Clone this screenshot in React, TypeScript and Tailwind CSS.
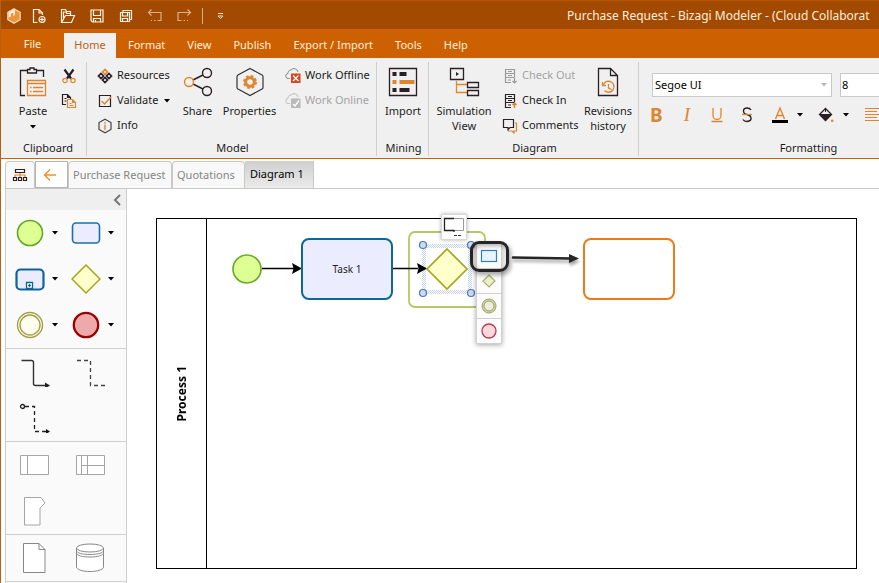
import type { ReactNode } from "react";

const ORANGE = "#e0852f";
const DARK = "#2b1f26";

function Caret({ className = "text-black" }: { className?: string }) {
  return (
    <svg width="6" height="4" viewBox="0 0 6 4" className={className} aria-hidden="true">
      <path d="M0 0h6L3 3.5z" fill="currentColor" />
    </svg>
  );
}

/* ---------- title bar ---------- */

function LogoIcon() {
  return (
    <svg width="16" height="16" viewBox="0 0 16 16">
      <path d="M8 .8l6.200 3.600v7.200L8 15.200 1.800 11.600V4.400z" fill="#ee9338" stroke="#f3d9bd" strokeWidth="1.200" />
      <path d="M8 1.500L2.500 4.700v4.800L5 8.500V5.500L7 5l.5 3L9 7V2z" fill="#fbead6" />
    </svg>
  );
}
function NewIcon() {
  return (
    <svg width="16" height="16" viewBox="0 0 16 16" fill="none" stroke="#fff3e3" strokeWidth="1.2">
      <path d="M6.500 14.500h-4v-13h5.500l3.500 3.500v2M8 1.500V5h3.500" />
      <circle cx="11" cy="11.500" r="3" />
      <path d="M11 9.500v4M9 11.500h4" />
    </svg>
  );
}
function OpenIcon() {
  return (
    <svg width="16" height="16" viewBox="0 0 16 16" fill="none" stroke="#fff3e3" strokeWidth="1.2">
      <path d="M1.500 14.500v-13h4l1 2h4v4M1.500 14.500l4-7h9l-3 7zM3.500 10V4h3v1.500h4" />
    </svg>
  );
}
function SaveIcon() {
  return (
    <svg width="16" height="16" viewBox="0 0 16 16" fill="none" stroke="#fff3e3" strokeWidth="1.2">
      <path d="M2 2h12v12H3.500L2 12.500zM4.500 2v5.500h7V2M4.500 14v-3.500h7V14M6.500 12v2" />
    </svg>
  );
}
function SaveAllIcon() {
  return (
    <svg width="16" height="16" viewBox="0 0 16 16" fill="none" stroke="#fff3e3" strokeWidth="1.2">
      <path d="M5 4.500V2.500h8.500v9h-2M2.500 4.500h9v9h-9zM4.500 4.500v3.500h5V4.500M4.500 13.500v-3h5v3" />
    </svg>
  );
}
function UndoIcon({ flip = false }: { flip?: boolean }) {
  return (
    <svg width="16" height="16" viewBox="0 0 16 16" fill="none" stroke="#dcae84" strokeWidth="1.2" className={flip ? "-scale-x-100" : ""}>
      <path d="M4.500 1.500l-3 3 3 3M1.500 4.500h12.500v8H10.500M8.500 12.500h-1.500M5 12.500h-1" />
    </svg>
  );
}

function TitleBar() {
  const tools: [string, ReactNode][] = [
    ["New", <NewIcon />],
    ["Open", <OpenIcon />],
    ["Save", <SaveIcon />],
    ["Save all", <SaveAllIcon />],
    ["Undo", <UndoIcon />],
    ["Redo", <UndoIcon flip />],
  ];
  return (
    <header className="flex h-[29px] shrink-0 items-center overflow-hidden border-t border-[#b85500] bg-[#a24a00] pt-0.5">
      <div className="flex w-[235px] shrink-0 items-center pl-[5px]">
        <LogoIcon />
        <div className="ml-[9px] flex items-center gap-[13px]">
          {tools.map(([name, icon]) => (
            <button key={name} aria-label={name} className="block">
              {icon}
            </button>
          ))}
        </div>
        <span className="ml-2.5 h-4 w-px bg-[#dcae84]" />
        <button aria-label="Customize toolbar" className="ml-[14px]">
          <svg width="7" height="7" viewBox="0 0 7 7" fill="none" stroke="#f6e3cf">
            <path d="M1 .5h5M1 3l2.500 2.500L6 3z" />
          </svg>
        </button>
      </div>
      <h1 className="ml-[331px] text-[12px] whitespace-nowrap text-[#fdeedd]">
        Purchase Request - Bizagi Modeler - (Cloud Collaborat
      </h1>
    </header>
  );
}

function MenuTabs() {
  const tabs = ["Format", "View", "Publish", "Export / Import", "Tools", "Help"];
  return (
    <nav className="flex h-[29px] shrink-0 items-end bg-[#cd6000] text-[#fff0df]">
      <button className="h-[28px] w-[63px]">File</button>
      <button className="mr-px h-[25px] w-[52px] bg-[#f0f0f0] text-[#c26012]">Home</button>
      {tabs.map((t) => (
        <button key={t} className="h-[25px] px-[11px]">
          {t}
        </button>
      ))}
    </nav>
  );
}

/* ---------- ribbon icons ---------- */

function PasteIcon() {
  return (
    <svg width="28" height="32" viewBox="0 0 28 32" fill="none" stroke={DARK} strokeWidth="1.3">
      <path d="M6 29.500H1.500V4.500H8M18 4.500h6.500V11M8.500 7V3.500h2.500V2h4v1.500h2.500V7z" />
      <g stroke={ORANGE}>
        <path d="M8.500 14.500h18v15h-18zM8.500 17.500h18" />
        <path d="M11 21.500h1.500M14 21.500h10M11 25.500h1.500M14 25.500h10" strokeWidth="1.6" />
      </g>
    </svg>
  );
}
function CutIcon() {
  return (
    <svg width="16" height="16" viewBox="0 0 16 16" fill="none">
      <path d="M3.500 1.500l6.500 9M12.500 1.500l-6.500 9" stroke={DARK} strokeWidth="2.2" />
      <circle cx="4" cy="12.500" r="2.2" stroke={ORANGE} strokeWidth="1.2" />
      <circle cx="12" cy="12.500" r="2.2" stroke={ORANGE} strokeWidth="1.2" />
    </svg>
  );
}
function CopyIcon() {
  return (
    <svg width="16" height="16" viewBox="0 0 16 16" fill="none" strokeWidth="1.2">
      <path d="M5 11.500H1.500v-10h5l3 3V6M6.500 1.500v3h3M3.500 5.500h2M3.500 8h2" stroke={DARK} />
      <path d="M6.500 6.500h5l3 3v5h-8zM11.500 6.500v3h3M8.500 10.500h2M8.500 12.500h4" stroke={ORANGE} />
    </svg>
  );
}
function ResourcesIcon() {
  return (
    <svg width="16" height="16" viewBox="0 0 16 16" fill="none" strokeWidth="1.7" stroke={DARK}>
      <path d="M4 5.500l2.500 2.500L4 10.500 1.500 8z" />
      <path d="M12 5.500l2.500 2.500L12 10.500 9.500 8z" />
      <path d="M8 9.500l2.500 2.500L8 14.500 5.500 12z" />
      <path d="M8 1.500l2.500 2.500L8 6.500 5.500 4z" stroke={ORANGE} />
    </svg>
  );
}
function ValidateIcon() {
  return (
    <svg width="16" height="16" viewBox="0 0 16 16" fill="none" strokeWidth="1.2">
      <path d="M2.500 2.500h11v11h-11z" stroke={DARK} />
      <path d="M4.500 8l3 3 6.500-7" stroke={ORANGE} strokeWidth="1.4" />
    </svg>
  );
}
function InfoIcon() {
  return (
    <svg width="16" height="16" viewBox="0 0 16 16" fill="none" strokeWidth="1.2">
      <path d="M8 1.200l6 3.400v6.800l-6 3.400-6-3.400V4.600z" stroke="#444" />
      <path d="M8 4v1.500M8 6.500V12" stroke={ORANGE} strokeWidth="1.4" />
    </svg>
  );
}
function ShareIcon() {
  return (
    <svg width="32" height="32" viewBox="0 0 32 32" fill="none" stroke={DARK} strokeWidth="1.4">
      <path d="M11 14L21 9M11 18l10 5" />
      <circle cx="25" cy="7" r="4.500" />
      <circle cx="25" cy="25" r="4.500" />
      <circle cx="7" cy="16" r="4.500" stroke={ORANGE} />
    </svg>
  );
}
function PropertiesIcon() {
  return (
    <svg width="32" height="32" viewBox="0 0 32 32" fill="none">
      <path d="M16 2.500L28 9q1 .6 1 1.600v10.800q0 1-1 1.600L16 29.500 4 23q-1-.6-1-1.600V10.600Q3 9.600 4 9z" stroke="#333" strokeWidth="1.2" />
      <circle cx="16" cy="16" r="4.300" stroke={ORANGE} strokeWidth="3" />
      <circle cx="16" cy="16" r="6" stroke={ORANGE} strokeWidth="2" strokeDasharray="2.700 2" />
    </svg>
  );
}
function CloudIcon({ online = false }: { online?: boolean }) {
  return (
    <svg width="16" height="16" viewBox="0 0 16 16" fill="none">
      <path d="M5 10.500H3.500a2.500 2.500 0 01-.5-5 3 3 0 013-3.500 4 4 0 017 2" stroke={online ? "#bdbdbd" : "#888"} />
      <path d="M6 5.500h9.500V15H6z" fill={online ? "#b9b9b9" : "#d2471f"} />
      {online ? (
        <path d="M8 11l2 2 4-5.500" stroke="#fff" strokeWidth="1.4" />
      ) : (
        <path d="M8 7.500l5.500 5.500M13.500 7.500L8 13" stroke="#fff" strokeWidth="1.3" />
      )}
    </svg>
  );
}
function ImportIcon() {
  return (
    <svg width="30" height="32" viewBox="0 0 30 32">
      <path d="M1.500 2.500h27v27h-27z" fill="none" stroke={DARK} strokeWidth="1.3" />
      <path d="M4.500 6h4v4h-4zM11.500 6h7v4h-7zM4.500 22h4v4h-4zM11.500 22h10v4h-10z" fill={DARK} />
      <path d="M4.500 14h4v4h-4zM11.500 14h15v4h-15z" fill={ORANGE} />
    </svg>
  );
}
function SimulationIcon() {
  return (
    <svg width="32" height="32" viewBox="0 0 32 32" fill="none" strokeWidth="1.3">
      <path d="M8.500 15v11.500H19M8.500 18.500H19" stroke={ORANGE} />
      <path d="M2.500 2.500h13v11h-13zM19.500 16.500h11v5h-11zM19.500 24.500h11v5h-11z" stroke={DARK} />
      <path d="M8 6l3 2-3 2z" fill={DARK} />
    </svg>
  );
}
function CheckIcon({ out = false }: { out?: boolean }) {
  return (
    <svg width="16" height="16" viewBox="0 0 16 16" fill="none" strokeWidth="1.2" stroke={out ? "#999" : DARK}>
      <path d="M9 14.500H3.500v-13h9V9M3.500 5.500h9M3.500 9.500h9M6 3.500h4M6 7.500h4M6 12h3" />
      {out ? (
        <path d="M12.500 10v5M10.500 13l2 2 2-2" />
      ) : (
        <path d="M12.500 15v-5M10.500 12l2-2 2 2" stroke={ORANGE} strokeWidth="1.5" />
      )}
    </svg>
  );
}
function CommentsIcon() {
  return (
    <svg width="16" height="16" viewBox="0 0 16 16" fill="none" strokeWidth="1.2">
      <path d="M13 5h1.500v8H12v2l-2-2H6.500v-1" stroke={ORANGE} />
      <path d="M1.500 1.500h10v8H8l-2 2v-2H1.500z" stroke={DARK} />
    </svg>
  );
}
function HistoryIcon() {
  return (
    <svg width="22" height="32" viewBox="0 0 22 32" fill="none" strokeWidth="1.3">
      <path d="M1.500 2.500h12l7 7v20h-19zM13.500 2.500v7h7" stroke={DARK} />
      <path d="M6.500 18.500a5.500 5.500 0 111 6M5.500 16v3.500H9M11.500 18v4l3 1.500" stroke={ORANGE} />
    </svg>
  );
}

/* ---------- ribbon ---------- */

function Group({ label, className, labelClass = "pl-px", children }: { label: string; className: string; labelClass?: string; children: ReactNode }) {
  return (
    <section aria-label={label} className={"relative flex shrink-0 flex-col " + className}>
      <div className="flex flex-1 items-start">{children}</div>
      <div className={"pb-0.5 text-center leading-4 " + labelClass}>{label}</div>
      <span className="absolute top-1 right-0 bottom-0.5 w-px bg-[#cfcfcf]" />
    </section>
  );
}

function LargeButton({ icon, label, className, caret = false }: { icon: ReactNode; label: string; className: string; caret?: boolean }) {
  return (
    <button className={"flex shrink-0 flex-col items-center pt-2 leading-[15px] " + className}>
      {icon}
      <span className="mt-[5px]">{label}</span>
      {caret && <span className="mt-px flex h-4 items-center"><Caret /></span>}
    </button>
  );
}

function SmallButton({ icon, label, disabled = false, caret = false }: { icon: ReactNode; label: string; disabled?: boolean; caret?: boolean }) {
  return (
    <button disabled={disabled} className="flex h-[25px] items-center gap-1 whitespace-nowrap disabled:text-[#a3a3a3]">
      {icon}
      {label}
      {caret && <span className="ml-0.5"><Caret /></span>}
    </button>
  );
}

function Formatting() {
  return (
    <div className="flex w-full flex-col pt-[15px] pl-[13px]">
      <div className="flex gap-2">
        <div className="relative">
          <select aria-label="Font family" className="block h-6 w-[180px] appearance-none border border-[#c8c8c8] bg-white px-0.5 text-black">
            <option>Segoe UI</option>
          </select>
          <span className="pointer-events-none absolute top-[10px] right-[5px]">
            <Caret className="block text-[#b5b5b5]" />
          </span>
        </div>
        <select aria-label="Font size" className="block h-6 w-[60px] appearance-none border border-[#c8c8c8] bg-white px-px text-black">
          <option>8</option>
        </select>
      </div>
      <div className="mt-1.5 flex h-6 items-center text-[19px] leading-6 text-[#e0852f]">
        <button aria-label="Bold" className="-ml-0.5 w-3 font-bold">B</button>
        <button aria-label="Italic" className="ml-5 w-[10px] font-['Liberation_Serif',serif] italic">I</button>
        <button aria-label="Underline" className="ml-[18px]">
          <svg width="14" height="18" viewBox="0 0 14 18" fill="none" stroke={ORANGE} strokeWidth="1.3">
            <path d="M3 2v7.500a4 4 0 008 0V2M1.500 15.500h11" />
          </svg>
        </button>
        <button aria-label="Strikethrough" className="ml-4">
          <svg width="14" height="18" viewBox="0 0 14 18" fill="none" strokeWidth="1.4">
            <path d="M11 4q-1-2-4-2Q3.500 2 3.500 5T7 8.500t4 3.500-4 3.500q-3 0-4-2" stroke={DARK} />
            <path d="M2 8.500h10" stroke={ORANGE} strokeWidth="1.2" />
          </svg>
        </button>
        <button aria-label="Font color" className="ml-[18px] flex items-center gap-[9px]">
          <svg width="16" height="18" viewBox="0 0 16 18" fill="none">
            <path d="M3.500 13L8 2l4.500 11M5 9.500h6" stroke={ORANGE} strokeWidth="1.4" />
            <path d="M0 14h16v3H0z" fill="#000" />
          </svg>
          <Caret />
        </button>
        <button aria-label="Fill color" className="ml-[15px] flex items-center gap-[9px]">
          <svg width="16" height="18" viewBox="0 0 16 18" fill="none">
            <path d="M7.500 2.500l6 6-6 6-6-6z" stroke={DARK} strokeWidth="1.3" />
            <path d="M1 8h13l-6.500 7z" fill={DARK} />
            <path d="M7.500 2v4" stroke={DARK} />
            <circle cx="14.200" cy="14.800" r="1.300" fill={ORANGE} />
          </svg>
          <Caret />
        </button>
        <button aria-label="Align left" className="ml-4">
          <svg width="18" height="18" viewBox="0 0 18 18" stroke={ORANGE}>
            <path d="M0 2.500h18M0 5.500h12M0 8.500h18M0 11.500h12M0 14.500h18" />
          </svg>
        </button>
      </div>
    </div>
  );
}

function Ribbon() {
  return (
    <div className="flex h-[101px] shrink-0 overflow-hidden border-b border-[#cd6000] bg-[#f0f0f0] text-[#1c1c1c]">
      <Group label="Clipboard" className="w-[86px]" labelClass="pl-2">
        <LargeButton icon={<PasteIcon />} label="Paste" caret className="ml-0.5 w-[60px]" />
        <div className="-ml-0.5 flex flex-col pt-[5px]">
          <button aria-label="Cut" className="flex h-[25px] items-center"><CutIcon /></button>
          <button aria-label="Copy" className="flex h-[25px] items-center"><CopyIcon /></button>
        </div>
      </Group>
      <Group label="Model" className="w-[290px]">
        <div className="flex w-[92px] shrink-0 flex-col pt-[5px] pl-[10px]">
          <SmallButton icon={<ResourcesIcon />} label="Resources" />
          <SmallButton icon={<ValidateIcon />} label="Validate" caret />
          <SmallButton icon={<InfoIcon />} label="Info" />
        </div>
        <LargeButton icon={<ShareIcon />} label="Share" className="w-[37px]" />
        <LargeButton icon={<PropertiesIcon />} label="Properties" className="w-[67px]" />
        <div className="flex flex-col pt-[5px] pl-0.5">
          <SmallButton icon={<CloudIcon />} label="Work Offline" />
          <SmallButton icon={<CloudIcon online />} label="Work Online" disabled />
        </div>
      </Group>
      <Group label="Mining" className="w-[52px]">
        <LargeButton icon={<ImportIcon />} label="Import" className="w-[52px]" />
      </Group>
      <Group label="Diagram" className="w-[210px]">
        <LargeButton icon={<SimulationIcon />} label="Simulation View" className="w-[70px]" />
        <div className="flex w-[81px] shrink-0 flex-col pt-[5px] pl-[3px]">
          <SmallButton icon={<CheckIcon out />} label="Check Out" disabled />
          <SmallButton icon={<CheckIcon />} label="Check In" />
          <SmallButton icon={<CommentsIcon />} label="Comments" />
        </div>
        <LargeButton icon={<HistoryIcon />} label="Revisions history" className="w-[56px]" />
      </Group>
      <Group label="Formatting" className="w-[338px]">
        <Formatting />
      </Group>
    </div>
  );
}

function DocumentTabs() {
  const box = "flex items-center rounded-t-sm border border-b-0 border-[#c8c8c8] bg-[#f8f8f8]";
  return (
    <div className="ml-1 flex h-[30px] shrink-0 items-stretch border-b border-[#c8c8c8] pt-0.5 text-[#858585]">
      <button aria-label="Process map" className={box + " w-[30px] justify-center"}>
        <svg width="16" height="14" viewBox="0 0 16 14" fill="none" strokeWidth="1.2">
          <path d="M8 5v2M3 9V7h10v2M8 7v2" stroke={ORANGE} />
          <path d="M3.500 1.500h9v3h-9zM1.500 9.500h3v3h-3zM6.500 9.500h3v3h-3zM11.500 9.500h3v3h-3z" stroke={DARK} />
        </svg>
      </button>
      <button aria-label="Back" className="flex w-[33px] items-center border border-[#b4b4b4] bg-white pl-[7px]">
        <svg width="14" height="14" viewBox="0 0 14 14" fill="none" stroke="#f0902a" strokeWidth="1.4">
          <path d="M13 7H1.500M7 1.500L1.500 7 7 12.500" />
        </svg>
      </button>
      <button className={box + " w-[104px] pl-1"}>Purchase Request</button>
      <button className={box + " w-[73px] pl-1"}>Quotations</button>
      <button className="flex w-[69px] items-center border-r border-[#c8c8c8] bg-linear-to-b from-[#cfcfcf] to-[#ebebeb] pl-[5px] text-black">
        Diagram 1
      </button>
    </div>
  );
}

/* ---------- palette ---------- */

function Tool({ name, children }: { name: string; children: ReactNode }) {
  return (
    <button aria-label={name} className="flex h-[46px] w-14 items-center">
      <span className="flex w-10 justify-center">{children}</span>
      <span className="flex w-2.5 justify-center"><Caret /></span>
    </button>
  );
}
function PlainTool({ name, children }: { name: string; children: ReactNode }) {
  return (
    <button aria-label={name} className="flex h-[46px] w-14 items-center">
      <span className="flex w-[50px] justify-center">{children}</span>
    </button>
  );
}
function ToolSection({ children }: { children: ReactNode }) {
  return <div className="flex flex-wrap border-b border-[#cfcfcf] pl-1">{children}</div>;
}

function Palette() {
  return (
    <aside className="w-[122px] shrink-0 border-x border-[#cfcfcf] bg-[#fafafa]">
      <div className="flex h-[21px] items-center justify-end bg-[#efefef] pr-1">
        <button aria-label="Collapse palette">
          <svg width="9" height="12" viewBox="0 0 9 12" fill="none" stroke="#777" strokeWidth="2">
            <path d="M7 1L2 6l5 5" />
          </svg>
        </button>
      </div>
      <ToolSection>
        <Tool name="Start event">
          <svg width="28" height="28"><circle cx="14" cy="14" r="12.500" fill="#deff93" stroke="#62a823" strokeWidth="1.6" /></svg>
        </Tool>
        <Tool name="Task">
          <svg width="30" height="24"><rect x="1.500" y="2" width="27" height="20" rx="3.500" fill="#ececff" stroke="#1a72a4" strokeWidth="1.6" /></svg>
        </Tool>
        <Tool name="Sub-process">
          <svg width="30" height="24" fill="none">
            <rect x="1.500" y="2.500" width="27" height="20" rx="4" fill="#ececff" stroke="#0a659a" strokeWidth="2.2" />
            <path d="M11.500 15.500h6v6h-6z" fill="#fff" stroke="#0a659a" strokeWidth="1.3" />
            <path d="M14.500 17v3M13 18.500h3" stroke="#0a659a" strokeWidth="1.2" />
          </svg>
        </Tool>
        <Tool name="Gateway">
          <svg width="30" height="30"><path d="M15 1l14 14-14 14L1 15z" fill="#ffffcc" stroke="#a6a61d" strokeWidth="1.5" /></svg>
        </Tool>
        <Tool name="Intermediate event">
          <svg width="28" height="28" fill="#fffdee" stroke="#a3a04a">
            <circle cx="14" cy="14" r="12.500" strokeWidth="1.4" />
            <circle cx="14" cy="14" r="10" strokeWidth="1.4" />
          </svg>
        </Tool>
        <Tool name="End event">
          <svg width="28" height="28"><circle cx="14" cy="14" r="12.200" fill="#eeaaaa" stroke="#990000" strokeWidth="2.3" /></svg>
        </Tool>
      </ToolSection>
      <ToolSection>
        <PlainTool name="Sequence flow">
          <svg width="30" height="30" fill="none" stroke="#333" strokeWidth="1.4">
            <path d="M1.500 3.500h10q2 0 2 2v21q0 2 2 2H26" />
            <path d="M25 25.500l5 3-5 3z" fill="#222" stroke="none" />
          </svg>
        </PlainTool>
        <PlainTool name="Association">
          <svg width="30" height="30" fill="none" stroke="#444" strokeWidth="1.3" strokeDasharray="4 3">
            <path d="M1 3.500h13.500v25H29" />
          </svg>
        </PlainTool>
        <PlainTool name="Message flow">
          <svg width="32" height="30" fill="none" stroke="#222" strokeWidth="1.3">
            <circle cx="3.500" cy="3.500" r="2" />
            <path d="M6 3.500h9.500v25H27" strokeDasharray="4 3" />
            <path d="M27 26l4 2.500-4 2.500z" fill="#111" stroke="none" />
          </svg>
        </PlainTool>
      </ToolSection>
      <ToolSection>
        <PlainTool name="Pool">
          <svg width="30" height="22" fill="#fff" stroke="#a5a5a5"><path d="M.5 1.500h28v19H.5zM7.500 1.500v19" /></svg>
        </PlainTool>
        <PlainTool name="Lane">
          <svg width="30" height="22" fill="#fff" stroke="#a5a5a5"><path d="M.5 1.500h28v19H.5zM5.500 1.500v19M11.500 1.500v19M5.500 11.500h23" /></svg>
        </PlainTool>
        <PlainTool name="Milestone">
          <svg width="22" height="30" fill="#fff" stroke="#a5a5a5"><path d="M.5 1.500h16.500l4 5.500-5 5v17H.5z" /></svg>
        </PlainTool>
      </ToolSection>
      <ToolSection>
        <PlainTool name="Data object">
          <svg width="24" height="32" fill="#fff" stroke="#888"><path d="M.5 1.500h15.500l6 6v23H.5zM16 1.500v6h6" /></svg>
        </PlainTool>
        <PlainTool name="Data store">
          <svg width="30" height="30" fill="#fff" stroke="#888">
            <path d="M.5 5v19c0 2.500 6 4.500 13.500 4.500s13.500-2 13.500-4.500V5" />
            <ellipse cx="14" cy="5" rx="13.500" ry="4" />
            <path d="M.5 7.500c0 2.500 6 4 13.500 4s13.500-1.500 13.500-4M.5 10c0 2.500 6 4 13.500 4s13.500-1.500 13.500-4" fill="none" />
          </svg>
        </PlainTool>
      </ToolSection>
    </aside>
  );
}

/* ---------- canvas ---------- */

function Connectors() {
  return (
    <svg width="649" height="349" viewBox="0 0 649 349" className="absolute top-0 left-0 overflow-visible" fill="none">
      <defs>
        <pattern id="dots" width="2" height="2" patternUnits="userSpaceOnUse">
          <path d="M0 0h1v1H0zM1 1h1v1H1z" fill="#c3d4ec" />
        </pattern>
        <filter id="soft" x="-20%" y="-400%" width="140%" height="900%">
          <feDropShadow dx="1" dy="3" stdDeviation="1.5" floodOpacity=".35" />
        </filter>
      </defs>
      <rect x="202" y="13" width="76" height="75" rx="6" stroke="#b9c663" strokeWidth="1.8" />
      <rect x="217" y="27" width="46" height="46" stroke="url(#dots)" strokeWidth="4" />
      <path d="M55 49.500h32M186 49.500h25" stroke="#000" strokeWidth="1.3" />
      <path d="M85 44l10 5.500L85 55l1.500-5.500zM210 44l10 5.500-10 5.500 1.500-5.500z" fill="#000" />
      <circle cx="40" cy="50" r="14" fill="#deff93" stroke="#6dab2c" strokeWidth="1.7" />
      <path d="M240 30l20 20-20 20-20-20z" fill="#ffffcc" stroke="#a6a61d" strokeWidth="1.7" />
      <g fill="#c8dcfa" stroke="#5175ad" strokeWidth="1.2">
        <circle cx="216" cy="26" r="3.500" />
        <circle cx="264" cy="26" r="3.500" />
        <circle cx="216" cy="74" r="3.500" />
        <circle cx="264" cy="74" r="3.500" />
      </g>
      <g filter="url(#soft)">
        <path d="M306 38.500l58 1" stroke="#262626" strokeWidth="2.6" strokeLinecap="round" />
        <path d="M362 35l10 4.500-10 4.500z" fill="#262626" />
      </g>
    </svg>
  );
}

function QuickMenu() {
  const item = "flex h-[25px] w-full items-center justify-center border-b border-[#d0d0d0] bg-[#fcfcfc]";
  return (
    <>
      <button
        aria-label="Add annotation"
        className="absolute top-[-5px] left-[234px] flex h-[26px] w-[26px] items-center justify-center border border-[#d8d8d8] bg-white shadow-[0_0_4px_rgba(0,0,0,0.3)]"
      >
        <svg width="22" height="20" viewBox="0 0 22 20" fill="none">
          <path d="M11 13.500h9.500v-12H11" stroke="#999" />
          <path d="M11 1.500H1.500v12H11V15" stroke="#222" strokeWidth="1.3" />
          <path d="M11 18.500h8" stroke="#333" strokeDasharray="3 1" />
        </svg>
      </button>
      <div className="absolute top-[24px] left-[269px] w-[26px] border border-b-0 border-[#d0d0d0] shadow-[0_1px_5px_rgba(0,0,0,0.35)]">
        <button aria-label="Add task" className={item}>
          <svg width="18" height="14"><rect x="1.500" y="1.500" width="15" height="11" fill="#e6f5ff" stroke="#2e80b5" strokeWidth="1.2" /></svg>
        </button>
        <button aria-label="Add gateway" className={item}>
          <svg width="14" height="14"><path d="M7 1l6 6-6 6-6-6z" fill="#e9efcc" stroke="#a9b360" strokeWidth="1.2" /></svg>
        </button>
        <button aria-label="Add intermediate event" className={item}>
          <svg width="16" height="16" stroke="#9ea069">
            <circle cx="8" cy="8" r="7" fill="#d6d8a4" />
            <circle cx="8" cy="8" r="5" fill="#ebebdf" />
          </svg>
        </button>
        <button aria-label="Add end event" className={item}>
          <svg width="16" height="16"><circle cx="8" cy="8" r="7" fill="#ffd6dc" stroke="#b03a50" strokeWidth="1.3" /></svg>
        </button>
      </div>
      <span className="pointer-events-none absolute top-[22px] left-[263px] h-[31px] w-[39px] rounded-[9px] border-3 border-[#262626] shadow-[2px_3px_4px_rgba(0,0,0,0.35),inset_1px_2px_4px_rgba(0,0,0,0.3)]" />
    </>
  );
}

function Canvas() {
  return (
    <main className="flex min-w-0 flex-1 bg-white pt-[29px] pr-[22px] pb-[14px] pl-[29px]">
      <div className="flex flex-1 border border-black">
        <div className="flex w-[50px] shrink-0 items-center justify-center border-r border-black">
          <span className="rotate-180 text-[12px] font-bold text-black [writing-mode:vertical-rl]">Process 1</span>
        </div>
        <div className="relative flex-1">
          <Connectors />
          <div className="absolute top-[19px] left-[94px] flex h-[62px] w-[92px] items-center justify-center rounded-lg border-2 border-[#0d6896] bg-[#ececff] text-[10px] text-[#222]">
            Task 1
          </div>
          <div className="absolute top-[19px] left-[376px] h-[62px] w-[92px] rounded-lg border-2 border-[#ee7a1c] bg-white" />
          <QuickMenu />
        </div>
      </div>
    </main>
  );
}

export default function App() {
  return (
    <div className="flex min-h-screen flex-col overflow-hidden border-l border-[#b85f14] bg-white font-['Noto_Sans',sans-serif] text-[11px]">
      <TitleBar />
      <MenuTabs />
      <Ribbon />
      <DocumentTabs />
      <div className="flex flex-1 pl-1">
        <Palette />
        <Canvas />
      </div>
    </div>
  );
}
